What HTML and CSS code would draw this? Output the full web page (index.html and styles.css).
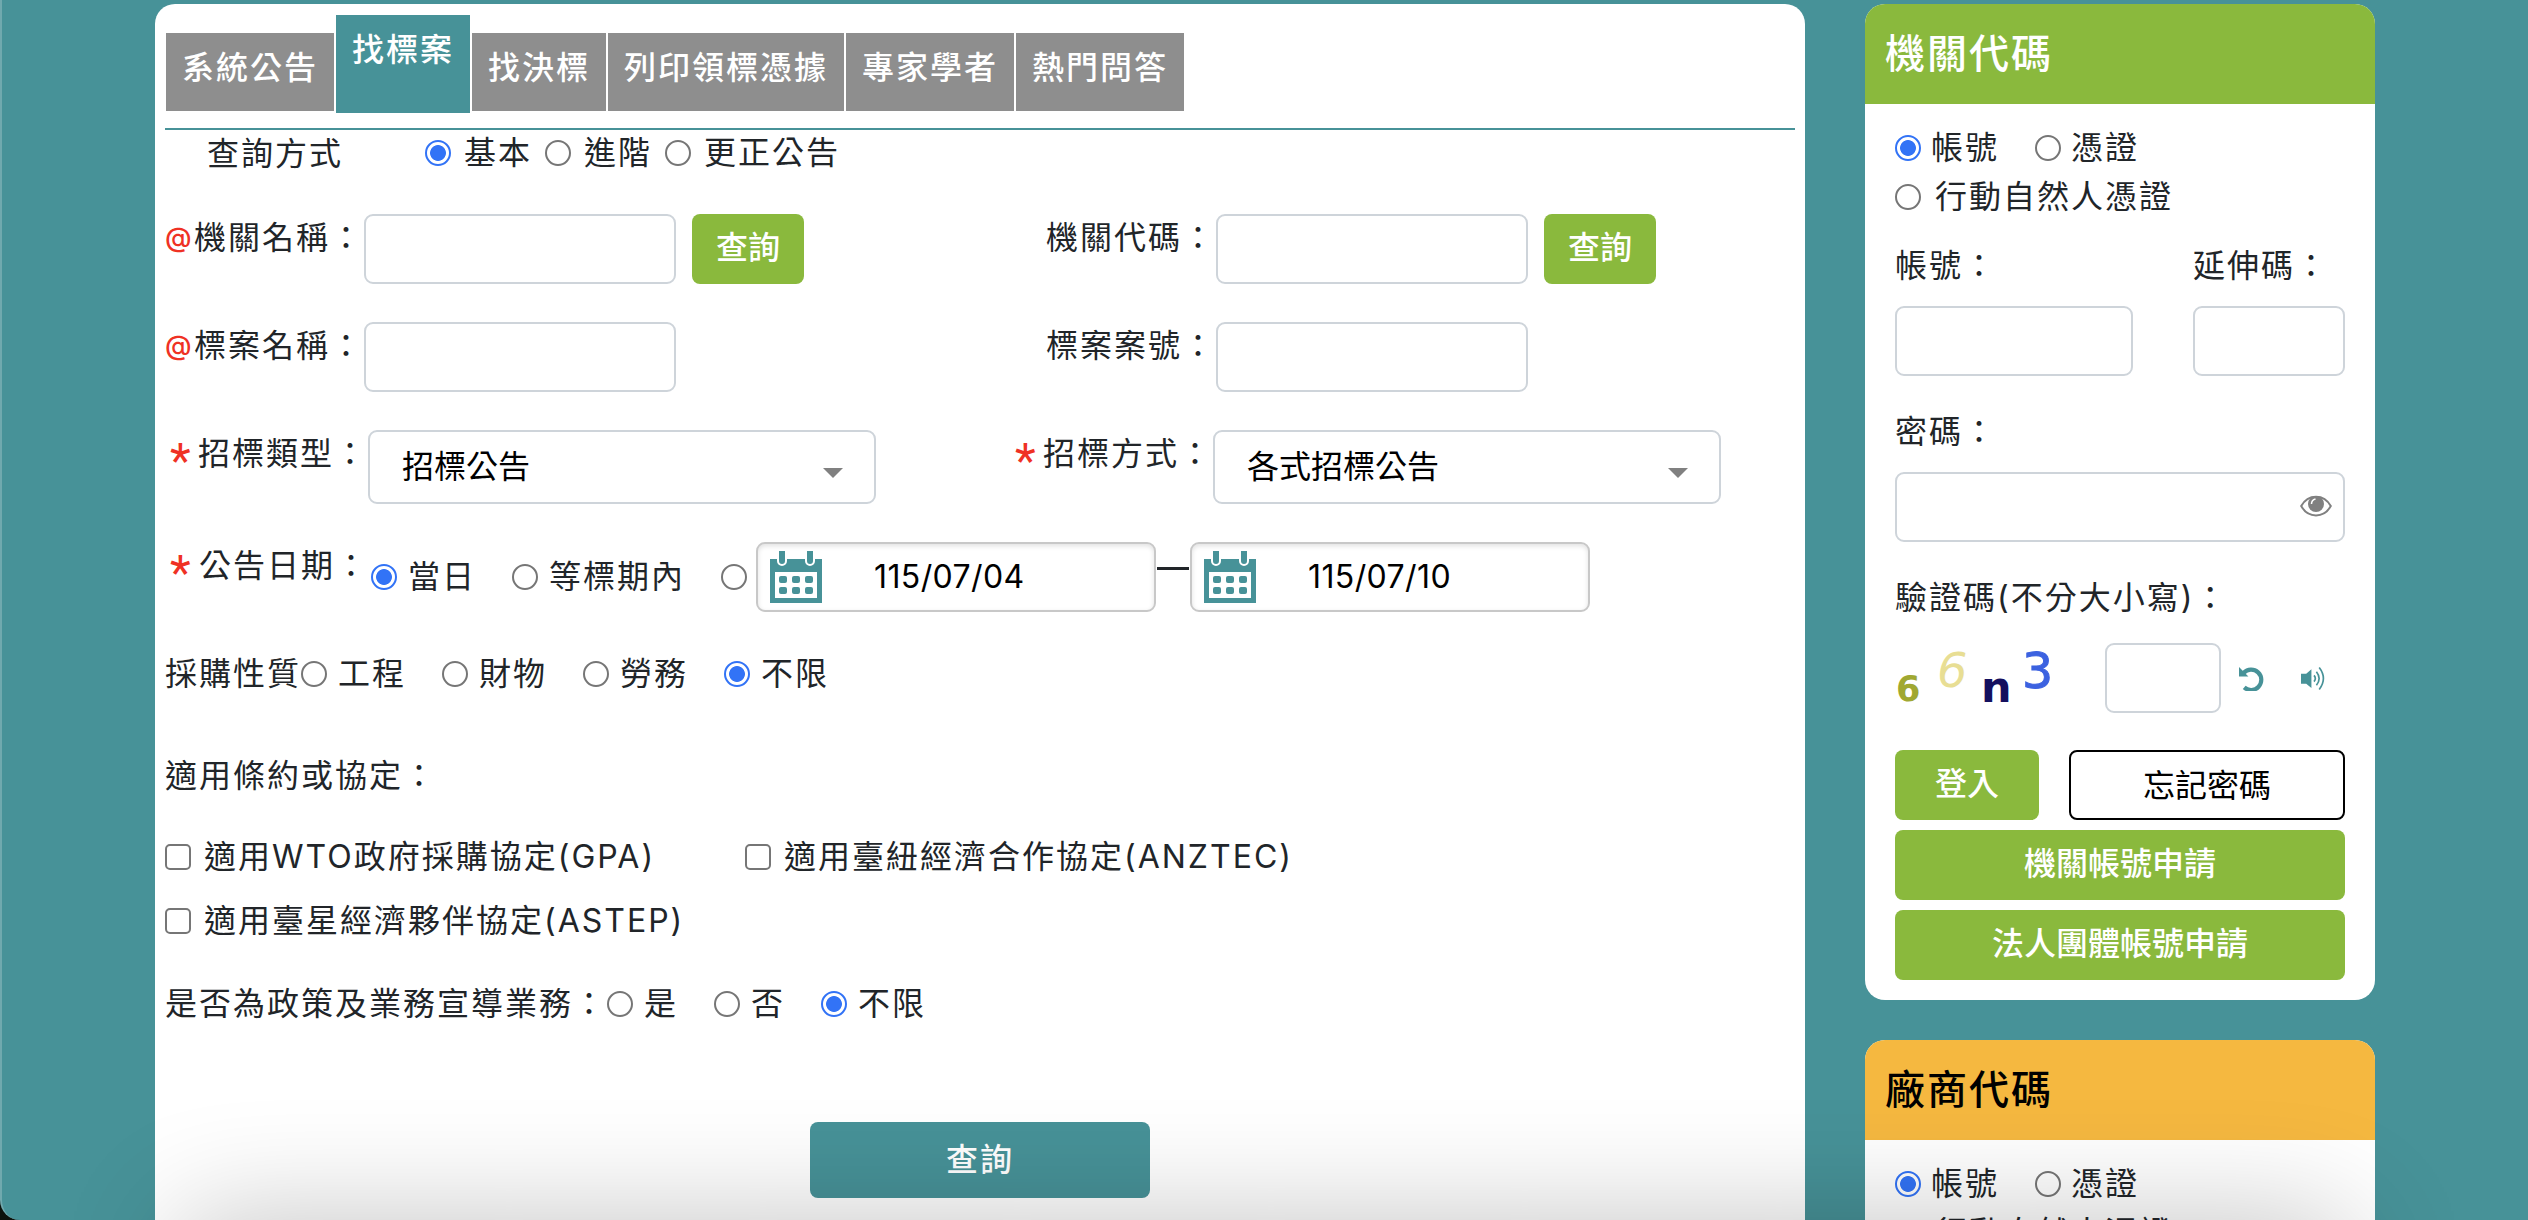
FILE: index.html
```html
<!DOCTYPE html>
<html lang="zh-Hant">
<head>
  <meta charset="UTF-8">
  <meta name="viewport" content="width=device-width, initial-scale=1.0">
  <title>政府電子採購網</title>
  <link rel="stylesheet" href="styles.css">
</head>
<body>
  <div class="page">
    <main class="panel">
      <ul class="tabs">
        <li>系統公告</li>
        <li class="active">找標案</li>
        <li>找決標</li>
        <li>列印領標憑據</li>
        <li>專家學者</li>
        <li>熱門問答</li>
      </ul>

      <form class="search-form">
        <div class="mode-row">
          <span class="mode-title">查詢方式</span>
          <label><input type="radio" name="mode" checked>基本</label>
          <label><input type="radio" name="mode">進階</label>
          <label><input type="radio" name="mode">更正公告</label>
        </div>

        <div class="row">
          <div class="cell">
            <span class="label"><span class="at">@</span>機關名稱：</span>
            <input type="text" class="control" name="orgName">
            <button type="button" class="btn btn-small">查詢</button>
          </div>
          <div class="cell cell-right">
            <span class="label">機關代碼：</span>
            <input type="text" class="control" name="orgId">
            <button type="button" class="btn btn-small">查詢</button>
          </div>
        </div>

        <div class="row">
          <div class="cell">
            <span class="label"><span class="at">@</span>標案名稱：</span>
            <input type="text" class="control" name="tenderName">
          </div>
          <div class="cell cell-right">
            <span class="label">標案案號：</span>
            <input type="text" class="control" name="tenderId">
          </div>
        </div>

        <div class="row">
          <div class="cell cell-type">
            <span class="label required"><span class="star">*</span>招標類型：</span>
            <div class="select">招標公告</div>
          </div>
          <div class="cell">
            <span class="label required"><span class="star">*</span>招標方式：</span>
            <div class="select">各式招標公告</div>
          </div>
        </div>

        <div class="row">
          <span class="label required date-label"><span class="star">*</span>公告日期：</span>
          <div class="radios date-radios">
            <label><input type="radio" name="date" checked>當日</label>
            <label><input type="radio" name="date">等標期內</label>
            <label><input type="radio" name="date"></label>
          </div>
          <div class="date-box">
            <svg class="calendar" viewBox="0 0 52 52">
              <path fill="#479298" d="M0 8H52V52H0Z"/>
              <path fill="#fff" d="M7 0h10v10a5 5 0 0 1-10 0ZM35 0h10v10a5 5 0 0 1-10 0ZM5 21H47V47H5Z"/>
              <path fill="#479298" d="M9 0h6v10a3 3 0 0 1-6 0ZM37 0h6v10a3 3 0 0 1-6 0Z"/>
              <g fill="#479298">
                <rect x="9" y="25" width="8" height="7" rx="2"/><rect x="22" y="25" width="8" height="7" rx="2"/><rect x="35" y="25" width="8" height="7" rx="2"/>
                <rect x="9" y="36" width="8" height="7" rx="2"/><rect x="22" y="36" width="8" height="7" rx="2"/><rect x="35" y="36" width="8" height="7" rx="2"/>
              </g>
            </svg>
            <span>115/07/04</span>
          </div>
          <span class="dash"></span>
          <div class="date-box">
            <svg class="calendar" viewBox="0 0 52 52">
              <path fill="#479298" d="M0 8H52V52H0Z"/>
              <path fill="#fff" d="M7 0h10v10a5 5 0 0 1-10 0ZM35 0h10v10a5 5 0 0 1-10 0ZM5 21H47V47H5Z"/>
              <path fill="#479298" d="M9 0h6v10a3 3 0 0 1-6 0ZM37 0h6v10a3 3 0 0 1-6 0Z"/>
              <g fill="#479298">
                <rect x="9" y="25" width="8" height="7" rx="2"/><rect x="22" y="25" width="8" height="7" rx="2"/><rect x="35" y="25" width="8" height="7" rx="2"/>
                <rect x="9" y="36" width="8" height="7" rx="2"/><rect x="22" y="36" width="8" height="7" rx="2"/><rect x="35" y="36" width="8" height="7" rx="2"/>
              </g>
            </svg>
            <span>115/07/10</span>
          </div>
        </div>

        <div class="line nature">
          <span class="line-label">採購性質</span>
          <div class="radios">
            <label><input type="radio" name="nature">工程</label>
            <label><input type="radio" name="nature">財物</label>
            <label><input type="radio" name="nature">勞務</label>
            <label><input type="radio" name="nature" checked>不限</label>
          </div>
        </div>

        <div class="line treaty-title">適用條約或協定：</div>
        <div class="treaties">
          <label class="check"><input type="checkbox">適用WTO政府採購協定(GPA)</label>
          <label class="check"><input type="checkbox">適用臺紐經濟合作協定(ANZTEC)</label>
          <label class="check"><input type="checkbox">適用臺星經濟夥伴協定(ASTEP)</label>
        </div>

        <div class="line policy">
          <span class="line-label">是否為政策及業務宣導業務：</span>
          <div class="radios">
            <label><input type="radio" name="policy">是</label>
            <label><input type="radio" name="policy">否</label>
            <label><input type="radio" name="policy" checked>不限</label>
          </div>
        </div>

        <button type="button" class="btn btn-search">查詢</button>
      </form>
    </main>

    <aside class="sidebar">
      <section class="card">
        <h2 class="card-header green">機關代碼</h2>
        <div class="card-body">
          <div class="login-type">
            <label><input type="radio" name="org" checked>帳號</label>
            <label><input type="radio" name="org">憑證</label>
          </div>
          <div class="login-type mobile">
            <label><input type="radio" name="org">行動自然人憑證</label>
          </div>

          <div class="fields">
            <div class="field account">
              <label>帳號：</label>
              <input type="text" class="control">
            </div>
            <div class="field ext">
              <label>延伸碼：</label>
              <input type="text" class="control">
            </div>
          </div>

          <div class="field">
            <label>密碼：</label>
            <div class="control password">
              <svg width="32" height="22" viewBox="0 0 32 22">
                <path d="M1.2 11C8-1.5 24-1.5 30.800 11C24 23.500 8 23.500 1.200 11Z" fill="#fff" stroke="#808080" stroke-width="2"/>
                <circle cx="16" cy="9" r="8" fill="#808080"/>
                <path d="M11.500 9Q11.500 5 15.500 4" fill="none" stroke="#fff" stroke-width="1.500"/>
              </svg>
            </div>
          </div>

          <div class="field">
            <label>驗證碼(不分大小寫)：</label>
            <div class="captcha">
              <svg class="captcha-text" width="180" height="70" viewBox="0 0 180 70">
                <text x="1" y="58" font-size="35" font-weight="bold" fill="#a0a832">6</text>
                <text x="42" y="44" font-size="48" font-style="italic" fill="#e8de94">6</text>
                <text x="86" y="59" font-size="43" font-weight="bold" fill="#14105e">n</text>
                <text x="127" y="45" font-size="49" fill="#3c62e0" stroke="#3c62e0">3</text>
              </svg>
              <input type="text" class="control">
              <svg class="refresh" width="25" height="25" viewBox="0 0 24 24">
                <path d="M4.500 6.500A9.800 9.800 0 1 1 5 20.500" fill="none" stroke="#479298" stroke-width="4"/>
                <path d="M0 1V10H9Z" fill="#479298"/>
              </svg>
              <svg class="speaker" width="25" height="25" viewBox="0 0 24 24">
                <path d="M0 7.500H5L10 3V21L5 17H0Z" fill="#479298"/>
                <path d="M12.500 9Q15 12 12.500 15M14.800 5.500Q20 12 14.800 18.500M17.500 1.500Q25.500 12 17.500 22.500" fill="none" stroke="#479298" stroke-width="1.600"/>
              </svg>
            </div>
          </div>

          <div class="actions">
            <button type="button" class="btn btn-login">登入</button>
            <button type="button" class="btn btn-outline">忘記密碼</button>
            <button type="button" class="btn btn-block">機關帳號申請</button>
            <button type="button" class="btn btn-block">法人團體帳號申請</button>
          </div>
        </div>
      </section>

      <section class="card">
        <h2 class="card-header orange">廠商代碼</h2>
        <div class="card-body">
          <div class="login-type">
            <label><input type="radio" name="vendor" checked>帳號</label>
            <label><input type="radio" name="vendor">憑證</label>
          </div>
          <div class="login-type mobile">
            <label><input type="radio" name="vendor">行動自然人憑證</label>
          </div>
        </div>
      </section>
    </aside>
  </div>
  <div class="bottom-shadow"></div>
</body>
</html>
```
FILE: styles.css
```css
:root {
  --teal: #479298;
  --green: #8ab93d;
  --orange: #f5b840;
  --text: #212529;
  --border: #ced4da;
  --blue: #3273f6;
}

* {
  margin: 0;
  padding: 0;
  box-sizing: border-box;
}

body {
  height: 1220px;
  overflow: hidden;
  background-color: #0c120c;
  color: var(--text);
  font-family: Inter, "Noto Sans CJK TC", sans-serif;
  font-size: 32px;
  line-height: 48px;
  letter-spacing: 2px;
}

button,
input {
  font-family: inherit;
  font-size: 32px;
}

.page {
  display: flex;
  align-items: flex-start;
  height: 1220px;
  padding: 4px 0 0 153px;
  overflow: hidden;
  background-color: var(--teal);
  border-left: 2px solid #70a9ae;
  border-bottom-left-radius: 20px;
}

.panel {
  width: 1650px;
  height: 1400px;
  flex-shrink: 0;
  padding: 11px 10px 0;
  background-color: white;
  border-radius: 20px;
}

/* Tabs */
.tabs {
  display: flex;
  gap: 2px;
  height: 115px;
  padding: 0 1px;
  align-items: flex-start;
  border-bottom: 2px solid var(--teal);
  list-style: none;
}

.tabs li {
  height: 78px;
  margin-top: 18px;
  padding: 11px 16px;
  background-color: #8e8e8e;
  color: white;
  font-weight: 500;
  white-space: nowrap;
}

.tabs .active {
  height: 98px;
  margin-top: 0;
  background-color: var(--teal);
}

/* Radio buttons and checkboxes */
label {
  display: flex;
  align-items: center;
  white-space: nowrap;
}

input[type="radio"],
input[type="checkbox"] {
  appearance: none;
  flex-shrink: 0;
  width: 26px;
  height: 26px;
  background-color: white;
  border: 2px solid #767676;
  border-radius: 50%;
}

input[type="checkbox"] {
  border-radius: 5px;
}

input[type="radio"]:checked {
  border-color: var(--blue);
  background: radial-gradient(circle, var(--blue) 7.5px, white 8.3px);
}

/* Search form */
.mode-row {
  display: flex;
  gap: 13px;
  padding-left: 42px;
  height: 84px;
}

.mode-row label {
  gap: 13px;
  height: 46px;
}

.mode-title {
  width: 205px;
  line-height: 47px;
}

.row {
  display: flex;
  margin-bottom: 38px;
}

.cell {
  display: flex;
  flex-shrink: 0;
  width: 881px;
}

.cell-type {
  width: 845px;
}

.label {
  flex-shrink: 0;
  display: flex;
  width: 199px;
  height: 48px;
  white-space: nowrap;
}

.cell-right .label {
  width: 170px;
}

.at {
  width: 29px;
  color: #ef3124;
  font-size: 27px;
  font-weight: 500;
  letter-spacing: 0;
}

.label.required {
  width: 203px;
}

.star {
  width: 34px;
  padding: 7px 0 0 5px;
  color: #ef3124;
  font-family: Roboto, sans-serif;
  font-size: 48px;
}

.control {
  width: 312px;
  height: 70px;
  background-color: white;
  border: 2px solid var(--border);
  border-radius: 9px;
}

.select {
  display: flex;
  align-items: center;
  justify-content: space-between;
  width: 508px;
  height: 74px;
  padding: 0 31px 0 32px;
  border: 2px solid var(--border);
  border-radius: 9px;
  color: black;
  letter-spacing: 0;
}

.select::after {
  content: "";
  margin-top: 12px;
  border: 10px solid transparent;
  border-top-color: #808080;
  border-bottom: 0;
}

.btn {
  height: 70px;
  background-color: var(--green);
  border: none;
  border-radius: 8px;
  color: white;
  font-weight: 500;
  line-height: 48px;
  padding-bottom: 2px;
}

.btn-small {
  width: 112px;
  margin-left: 16px;
}

.radios {
  display: flex;
  align-items: center;
  gap: 36px;
}

.radios label {
  gap: 11px;
}

.date-label.required {
  width: 206px;
}

.date-radios {
  width: 385px;
}

.date-box {
  display: flex;
  align-items: center;
  gap: 52px;
  width: 400px;
  height: 70px;
  padding-left: 12px;
  border: 2px solid #c8c8c8;
  border-radius: 9px;
  box-shadow: inset 0 2px 5px rgba(0,0,0,0.12);
  color: black;
  letter-spacing: 0.4px;
}

.calendar {
  width: 52px;
  height: 52px;
}

.dash {
  width: 32px;
  height: 3px;
  margin: 25px 1px 0;
  background-color: var(--text);
}

.line {
  display: flex;
  height: 48px;
}

.nature {
  margin-bottom: 54px;
}

.nature .line-label {
  width: 136px;
  white-space: nowrap;
}

.treaties {
  display: grid;
  grid-template-columns: 580px 700px;
  row-gap: 16px;
  margin: 33px 0 35px;
}

.check {
  height: 48px;
  gap: 13px;
}

.policy .line-label {
  width: 442px;
  white-space: nowrap;
}

.btn-search {
  display: block;
  width: 340px;
  height: 76px;
  margin: 94px 0 0 645px;
  padding-bottom: 0;
  background-color: var(--teal);
  letter-spacing: 2px;
}

/* Login cards */
.sidebar {
  width: 510px;
  margin-left: 60px;
}

.card {
  height: 996px;
  margin-bottom: 40px;
  background-color: white;
  border-radius: 20px;
  overflow: hidden;
}

.card-header {
  height: 100px;
  padding: 20px;
  color: white;
  font-size: 40px;
  font-weight: 500;
  line-height: 60px;
}

.green {
  background-color: var(--green);
}

.orange {
  background-color: var(--orange);
  color: black;
}

.card-body {
  padding: 19px 30px;
}

.login-type {
  display: flex;
  gap: 36px;
  height: 49px;
}

.login-type label {
  gap: 10px;
}

.login-type.mobile label {
  gap: 14px;
}

.login-type.mobile {
  margin-bottom: 21px;
}

.fields {
  display: flex;
  justify-content: space-between;
}

.field {
  margin-bottom: 31px;
}

.field label {
  margin-bottom: 16px;
}

.field .control {
  display: block;
}

.fields .field,
.fields + .field {
  margin-bottom: 32px;
}

.account .control {
  width: 238px;
}

.ext,
.ext .control {
  width: 152px;
}

.field .password {
  display: flex;
  align-items: center;
  justify-content: flex-end;
  width: 100%;
  padding: 0 11px 3px 0;
}

.captcha {
  display: flex;
  align-items: center;
  margin-top: 21px;
}

.captcha-text {
  margin-right: 30px;
  font-family: "DejaVu Sans", sans-serif;
  letter-spacing: 0;
}

.captcha .control {
  width: 116px;
}

.refresh {
  margin-left: 18px;
}

.speaker {
  margin-left: 37px;
}

.actions {
  display: flex;
  flex-wrap: wrap;
  justify-content: space-between;
  row-gap: 10px;
  margin-top: 37px;
}

.btn-login {
  width: 144px;
}

.btn-outline {
  width: 276px;
  padding: 2px 0 0;
  background-color: white;
  border: 2px solid black;
  color: black;
  font-weight: 400;
}

.btn-block {
  width: 100%;
}

/* Soft shade along the bottom edge */
.bottom-shadow {
  position: fixed;
  left: 180px;
  right: 180px;
  top: 100%;
  height: 200px;
  box-shadow: 0 0 120px rgba(0,0,0,0.24);
}
```
